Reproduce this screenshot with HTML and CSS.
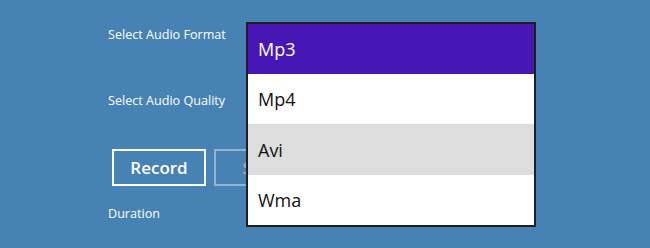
FILE: index.html
```html
<!DOCTYPE html>
<html lang="en">
<head>
  <meta charset="UTF-8">
  <title>Audio Recorder</title>
  <link rel="stylesheet" href="styles.css">
</head>
<body>
  <div class="page">
    <div class="form">
      <div class="row format-row">
        <span class="label">Select Audio Format</span>
      </div>
      <div class="row quality-row">
        <span class="label">Select Audio Quality</span>
      </div>
      <div class="buttons">
        <button class="btn">Record</button>
        <button class="btn disabled">Stop</button>
      </div>
      <div class="row duration-row">
        <span class="label">Duration</span>
      </div>
    </div>

    <ul class="dropdown">
      <li class="selected">Mp3</li>
      <li>Mp4</li>
      <li class="hover">Avi</li>
      <li>Wma</li>
    </ul>
  </div>
</body>
</html>
```

FILE: styles.css
```css
/* Reset */
* {
  margin: 0;
  padding: 0;
  box-sizing: border-box;
  font-family: "Open Sans", "Noto Sans", sans-serif;
}

body {
  background: #4682b4;
  width: 650px;
  height: 248px;
  overflow: hidden;
}

.page {
  position: relative;
  height: 100%;
}

/* Form column */
.form {
  padding: 24px 0 0 108px;
  display: flex;
  flex-direction: column;
}

.row {
  height: 20px;
  display: flex;
  align-items: center;
}

.label {
  color: #ffffff;
  font-size: 12.6px;
}

.quality-row {
  margin-top: 46px;
}

.buttons {
  display: flex;
  gap: 8px;
  margin: 39px 0 0 4px;
}

.btn {
  width: 94px;
  height: 37px;
  background: transparent;
  border: 2px solid #ffffff;
  color: #ffffff;
  font-size: 17px;
  font-weight: 600;
  cursor: pointer;
}

.btn.disabled {
  border-color: rgba(255, 255, 255, 0.4);
  color: rgba(255, 255, 255, 0.4);
}

.duration-row {
  margin-top: 17px;
}

/* Open dropdown list */
.dropdown {
  position: absolute;
  left: 246px;
  top: 22px;
  width: 290px;
  list-style: none;
  border: 2px solid #1f1f1f;
  background: #ffffff;
}

.dropdown li {
  height: 50px;
  padding-left: 10px;
  display: flex;
  align-items: center;
  font-size: 18px;
  color: #111111;
}

.dropdown li.selected {
  background: #4617b4;
  color: #ffffff;
}

.dropdown li.hover {
  height: 51px;
  background: #dddddd;
}
```
